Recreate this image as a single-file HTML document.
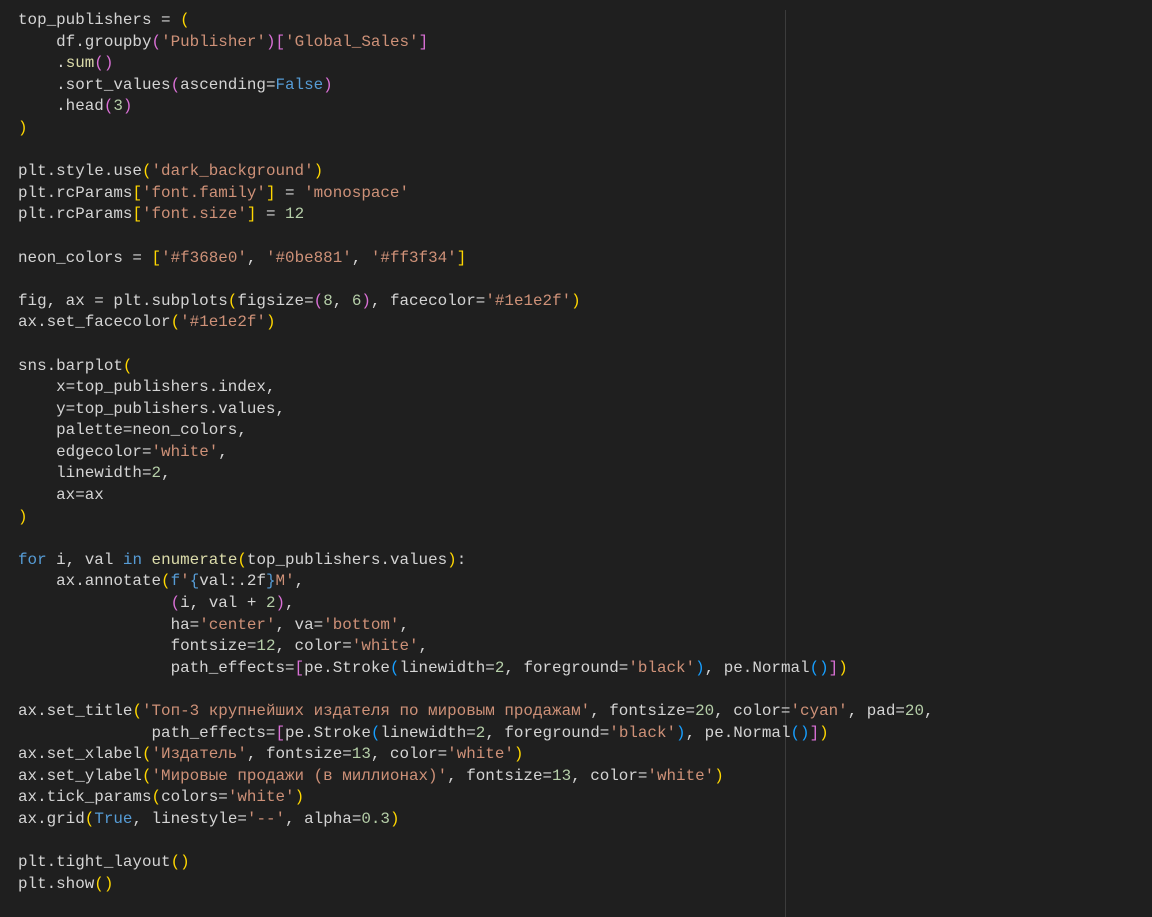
<!DOCTYPE html>
<html><head><meta charset="utf-8"><style>
html,body{margin:0;padding:0;background:#1f1f1f;width:1152px;height:917px;overflow:hidden}
pre{margin:0;position:absolute;left:18px;top:10px;font-family:"Liberation Mono","DejaVu Sans Mono",monospace;font-size:15.9px;line-height:21.6px;color:#d4d4d4}
.s{color:#ce9178}.n{color:#b5cea8}.k{color:#569cd6}.f{color:#dcdcaa}
.b1{color:#ffd700}.b2{color:#da70d6}.b3{color:#179fff}
.ruler{position:absolute;left:785px;top:10px;width:1px;height:907px;background:#3c3c3c}
</style></head><body>
<div class="ruler"></div>
<pre>top_publishers = <span class="b1">(</span>
    df.groupby<span class="b2">(</span><span class="s">'Publisher'</span><span class="b2">)[</span><span class="s">'Global_Sales'</span><span class="b2">]</span>
    .<span class="f">sum</span><span class="b2">()</span>
    .sort_values<span class="b2">(</span>ascending=<span class="k">False</span><span class="b2">)</span>
    .head<span class="b2">(</span><span class="n">3</span><span class="b2">)</span>
<span class="b1">)</span>

plt.style.use<span class="b1">(</span><span class="s">'dark_background'</span><span class="b1">)</span>
plt.rcParams<span class="b1">[</span><span class="s">'font.family'</span><span class="b1">]</span> = <span class="s">'monospace'</span>
plt.rcParams<span class="b1">[</span><span class="s">'font.size'</span><span class="b1">]</span> = <span class="n">12</span>

neon_colors = <span class="b1">[</span><span class="s">'#f368e0'</span>, <span class="s">'#0be881'</span>, <span class="s">'#ff3f34'</span><span class="b1">]</span>

fig, ax = plt.subplots<span class="b1">(</span>figsize=<span class="b2">(</span><span class="n">8</span>, <span class="n">6</span><span class="b2">)</span>, facecolor=<span class="s">'#1e1e2f'</span><span class="b1">)</span>
ax.set_facecolor<span class="b1">(</span><span class="s">'#1e1e2f'</span><span class="b1">)</span>

sns.barplot<span class="b1">(</span>
    x=top_publishers.index,
    y=top_publishers.values,
    palette=neon_colors,
    edgecolor=<span class="s">'white'</span>,
    linewidth=<span class="n">2</span>,
    ax=ax
<span class="b1">)</span>

<span class="k">for</span> i, val <span class="k">in</span> <span class="f">enumerate</span><span class="b1">(</span>top_publishers.values<span class="b1">)</span>:
    ax.annotate<span class="b1">(</span><span class="k">f</span><span class="s">'</span><span class="k">{</span>val:.2f<span class="k">}</span><span class="s">M'</span>,
                <span class="b2">(</span>i, val + <span class="n">2</span><span class="b2">)</span>,
                ha=<span class="s">'center'</span>, va=<span class="s">'bottom'</span>,
                fontsize=<span class="n">12</span>, color=<span class="s">'white'</span>,
                path_effects=<span class="b2">[</span>pe.Stroke<span class="b3">(</span>linewidth=<span class="n">2</span>, foreground=<span class="s">'black'</span><span class="b3">)</span>, pe.Normal<span class="b3">()</span><span class="b2">]</span><span class="b1">)</span>

ax.set_title<span class="b1">(</span><span class="s">'Топ-3 крупнейших издателя по мировым продажам'</span>, fontsize=<span class="n">20</span>, color=<span class="s">'cyan'</span>, pad=<span class="n">20</span>,
              path_effects=<span class="b2">[</span>pe.Stroke<span class="b3">(</span>linewidth=<span class="n">2</span>, foreground=<span class="s">'black'</span><span class="b3">)</span>, pe.Normal<span class="b3">()</span><span class="b2">]</span><span class="b1">)</span>
ax.set_xlabel<span class="b1">(</span><span class="s">'Издатель'</span>, fontsize=<span class="n">13</span>, color=<span class="s">'white'</span><span class="b1">)</span>
ax.set_ylabel<span class="b1">(</span><span class="s">'Мировые продажи (в миллионах)'</span>, fontsize=<span class="n">13</span>, color=<span class="s">'white'</span><span class="b1">)</span>
ax.tick_params<span class="b1">(</span>colors=<span class="s">'white'</span><span class="b1">)</span>
ax.grid<span class="b1">(</span><span class="k">True</span>, linestyle=<span class="s">'--'</span>, alpha=<span class="n">0.3</span><span class="b1">)</span>

plt.tight_layout<span class="b1">()</span>
plt.show<span class="b1">()</span></pre>
</body></html>
